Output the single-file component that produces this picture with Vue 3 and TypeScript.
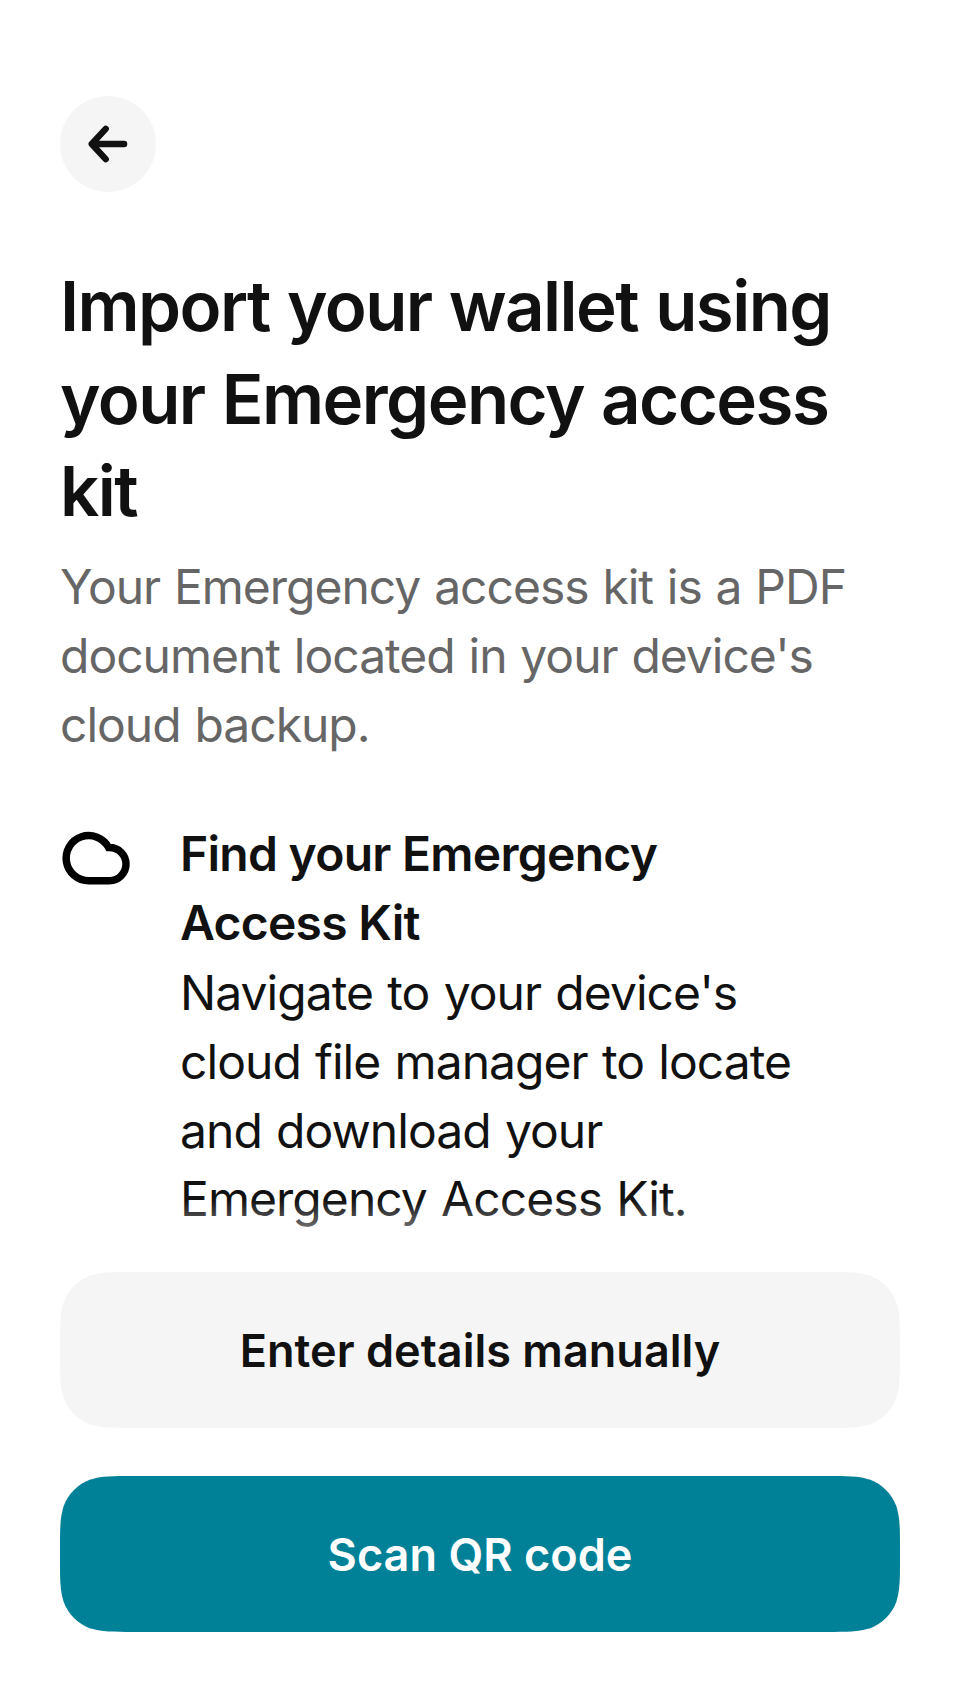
<script setup lang="ts">
const title: string[] = ['Import your wallet using', 'your Emergency access', 'kit']
const intro: string[] = ['Your Emergency access kit is a PDF', "document located in your device's", 'cloud backup.']
const stepTitle: string[] = ['Find your Emergency', 'Access Kit']
const stepBody: string[] = ["Navigate to your device's", 'cloud file manager to locate', 'and download your', 'Emergency Access Kit.']
</script>

<template>
  <main class="screen">
    <button class="back" aria-label="Back">
      <svg width="96" height="96" viewBox="0 0 96 96" fill="none" stroke="#111" stroke-width="6.4" stroke-linecap="round" stroke-linejoin="round">
        <path d="M64.100 48H32M45.700 32.900L31.700 48L45.700 63.100" />
      </svg>
    </button>
    <h1><span v-for="l in title" :key="l">{{ l }}</span></h1>
    <p class="intro"><span v-for="l in intro" :key="l">{{ l }}</span></p>
    <section class="step">
      <svg class="cloud" width="72" height="72" viewBox="0 0 72 72" fill="none" stroke="#000" stroke-width="7.5">
        <path d="M28.750 61.700A22.550 22.550 0 1 1 48.600 28.500H49.400A16.600 16.600 0 0 1 49.400 61.700Z" />
      </svg>
      <div class="copy">
        <h2><span v-for="l in stepTitle" :key="l">{{ l }}</span></h2>
        <p><span v-for="l in stepBody" :key="l">{{ l }}</span></p>
      </div>
    </section>
    <footer>
      <button class="action secondary">Enter details manually</button>
      <button class="action primary">Scan QR code</button>
    </footer>
  </main>
</template>

<style>
body { margin: 0; background: #fff; }
</style>
<style scoped>
.screen { box-sizing: border-box; width: 960px; height: 1704px; padding: 96px 60px 0; overflow: hidden; position: relative; color: #111; font-family: Inter, sans-serif; background: #fff; }
span { display: block; white-space: nowrap; }
button { border: 0; padding: 0; font-family: inherit; display: flex; align-items: center; justify-content: center; }
.back { width: 96px; height: 96px; border-radius: 50%; background: #f5f5f5; }
h1 { margin: 68px 0 0; font-size: 69px; line-height: 92.6px; font-weight: 600; letter-spacing: -1.57px; word-spacing: 1.3px; }
.intro { margin: 15.4px 0 0; font-size: 48px; line-height: 68.7px; color: #666; letter-spacing: -1px; word-spacing: 1.3px; }
.step { display: flex; gap: 48px; margin-top: 60px; }
.cloud { flex: none; }
h2, .copy p { margin: 0; font-size: 48px; }
h2 { font-weight: 600; line-height: 69px; letter-spacing: -0.73px; }
.copy p { margin-top: 2px; font-weight: 400; line-height: 68.7px; letter-spacing: -0.95px; word-spacing: 1.7px; }
footer { position: absolute; left: 60px; right: 60px; top: 1200px; padding-top: 72px; display: flex; flex-direction: column; gap: 48px; background: linear-gradient(rgba(255,255,255,0), #fff 72px); }
.action { width: 840px; height: 156px; font-size: 45px; font-weight: 600; letter-spacing: 0.03px;
  /* continuous-curvature corners, 48px radius */
  clip-path: path('M73.400 0H766.600C787.800 0 798.300 0 807.800 3.140L809.700 3.600C822.100 8.110 831.900 17.900 836.400 30.300C840 41.700 840 52.200 840 73.400V82.600C840 103.800 840 114.300 836.400 125.700C831.900 138.100 822.100 147.900 809.700 152.400L807.800 152.860C798.300 156 787.800 156 766.600 156H73.400C52.200 156 41.700 156 32.200 152.860L30.300 152.400C17.900 147.900 8.110 138.100 3.600 125.700C0 114.300 0 103.800 0 82.600V73.400C0 52.200 0 41.700 3.600 30.300C8.110 17.900 17.900 8.110 30.300 3.600L32.200 3.140C41.700 0 52.200 0 73.400 0Z'); }
.secondary { background: #f5f5f5; color: #111; }
.primary { background: #008198; color: #fff; }
</style>
